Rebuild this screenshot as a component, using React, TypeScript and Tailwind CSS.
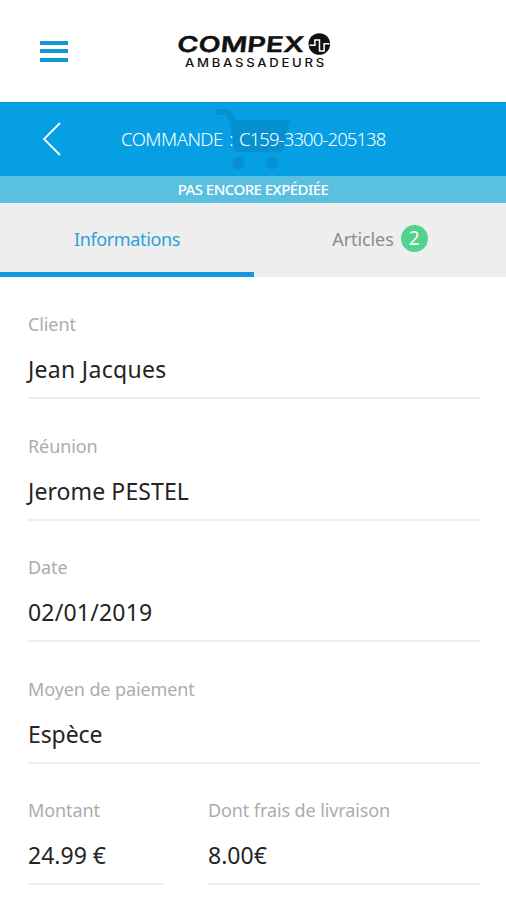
type FieldProps = { label: string; value: string; labelClass?: string; valueClass?: string; className?: string };

function Field({ label, value, labelClass = "", valueClass = "", className = "" }: FieldProps) {
  return (
    <div className={`flex h-[121.4px] flex-col justify-end border-b-2 border-[#ededed] ${className}`}>
      <div className={`text-[18px] leading-6 tracking-[-0.1px] text-[#acacac] whitespace-nowrap ${labelClass}`}>{label}</div>
      <div className={`mt-[17px] mb-3 text-[23px] leading-8 text-[#242424] whitespace-nowrap ${valueClass}`}>{value}</div>
    </div>
  );
}

function Logo() {
  return (
    <svg width="160" height="44" viewBox="174 30 160 44" fontFamily="Inter, sans-serif" fill="#111">
      <text transform="translate(176.5 53) skewX(-6)" fontSize="21.8" fontWeight="600" textLength="127" lengthAdjust="spacingAndGlyphs" stroke="#111" strokeWidth=".4">COMPEX</text>
      <text transform="translate(185 67.5) scale(1.15 1)" fontSize="11.4" fontWeight="500" textLength="121" lengthAdjust="spacing">AMBASSADEURS</text>
      <circle cx="319.3" cy="45" r="10.8" />
      <path d="M309.5 46.2h5.4v-5.2h4.6v11h4.6v-7.2h5.4" fill="none" stroke="#fff" strokeWidth="1.5" />
    </svg>
  );
}

export default function App() {
  return (
    <div className="h-[900px] w-full overflow-hidden bg-white font-['Noto_Sans','Open_Sans',sans-serif]">
      <header className="flex h-[102px] items-center pl-10">
        <button className="flex h-[21px] w-7 flex-col justify-between" aria-label="Menu">
          <span className="h-1 w-full bg-[#1296d8]" />
          <span className="h-1 w-full bg-[#1296d8]" />
          <span className="h-1 w-full bg-[#1296d8]" />
        </button>
        <div className="ml-[106px]"><Logo /></div>
      </header>

      <section className="relative flex h-[74px] items-center bg-[#069fe3]">
        <svg className="absolute left-[214px] top-[6px]" width="80" height="64" viewBox="214 108 80 64" fill="#0790d0">
          <path d="M216 109h10q5 0 7 5l2 6h55l-8 32h-47l-6-31-3-6h-10z" />
          <circle cx="238.5" cy="163" r="6.3" />
          <circle cx="272" cy="163" r="6.3" />
        </svg>
        <svg className="relative ml-[42px]" width="20" height="34" viewBox="0 0 20 34" fill="none" stroke="#fff" strokeWidth="1.8">
          <path d="M18 1L2 17l16 16" />
        </svg>
        <h1 className="relative ml-[59px] flex gap-[6px] text-[18.5px] font-light whitespace-nowrap text-white">
          <span className="tracking-[-0.5px] [word-spacing:2px]">COMMANDE :</span>
          <span className="tracking-[-0.9px]">C159-3300-205138</span>
        </h1>
      </section>
      <div className="flex h-[27px] items-center justify-center bg-[#5ac0e0] pb-[2px] text-[15px] leading-5 font-medium tracking-[-0.55px] text-white">PAS ENCORE EXPÉDIÉE</div>

      <nav className="flex h-[74px] bg-[#eeeeee] text-[18px]">
        <div className="flex w-[254px] items-center justify-center border-b-[5px] border-[#1296dc] pt-[3px] tracking-[-0.35px] text-[#2da0da]">Informations</div>
        <div className="flex flex-1 items-center justify-center gap-[7px] pb-1 text-[#8c8c8c]">
          <span className="pt-[3px] tracking-[-0.1px]">Articles</span>
          <span className="flex size-[27px] items-center justify-center rounded-full bg-[#52d28a] text-[19px] text-white">2</span>
        </div>
      </nav>

      <main className="pt-px pl-7 pr-[26px]">
        <Field label="Client" value="Jean Jacques" valueClass="tracking-[0.3px]" />
        <Field label="Réunion" value="Jerome PESTEL" valueClass="tracking-[0.1px]" />
        <Field label="Date" value="02/01/2019" valueClass="tracking-[0.2px]" />
        <Field label="Moyen de paiement" value="Espèce" valueClass="tracking-[-0.1px]" />
        <div className="flex gap-[44px]">
          <Field className="w-[136px]" label="Montant" value="24.99 €" />
          <Field className="flex-1" label="Dont frais de livraison" value="8.00€" />
        </div>
      </main>
    </div>
  );
}
